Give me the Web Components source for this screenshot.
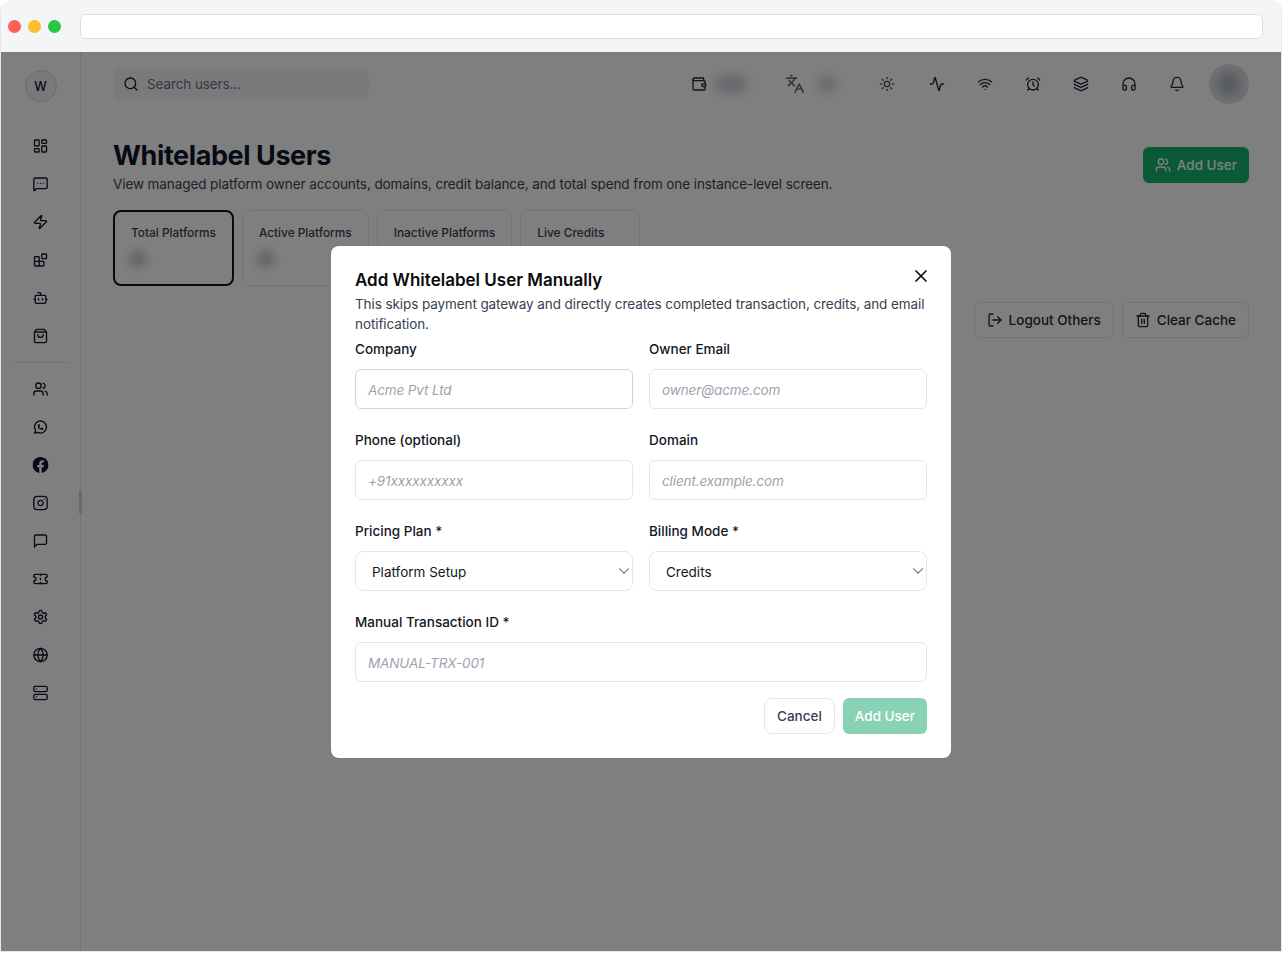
<!DOCTYPE html>
<html lang="en"><head><meta charset="utf-8"><title>Whitelabel Users</title>
<style>
html,body{margin:0;padding:0;background:#fff;height:953px;overflow:hidden}
body{font-family:Inter,"Liberation Sans",sans-serif;font-size:13.5px;color:#111827}
</style></head><body>
<wl-frame>
  <wl-sidebar slot="side">
    <wl-nav name="dashboard"></wl-nav><wl-nav name="chat"></wl-nav><wl-nav name="zap"></wl-nav><wl-nav name="blocks"></wl-nav><wl-nav name="bot"></wl-nav><wl-nav name="bag"></wl-nav>
    <wl-rule></wl-rule>
    <wl-nav name="users"></wl-nav><wl-nav name="whatsapp"></wl-nav><wl-nav name="facebook"></wl-nav><wl-nav name="instagram"></wl-nav><wl-nav name="message"></wl-nav><wl-nav name="ticket"></wl-nav><wl-nav name="settings"></wl-nav><wl-nav name="globe"></wl-nav><wl-nav name="server"></wl-nav>
  </wl-sidebar>
  <wl-topbar slot="top"></wl-topbar>
  <wl-page slot="page">
    <span slot="title">Whitelabel Users</span>
    <span slot="sub">View managed platform owner accounts, domains, credit balance, and total spend from one instance-level screen.</span>
    <wl-btn slot="action" variant="primary" icon="users">Add User</wl-btn>
    <wl-stat slot="stats" active dot>Total Platforms</wl-stat>
    <wl-stat slot="stats" dot>Active Platforms</wl-stat>
    <wl-stat slot="stats">Inactive Platforms</wl-stat>
    <wl-stat slot="stats">Live Credits</wl-stat>
    <wl-btn slot="tools" icon="logout">Logout Others</wl-btn>
    <wl-btn slot="tools" icon="trash">Clear Cache</wl-btn>
  </wl-page>
  <wl-modal slot="modal">
    <span slot="title">Add Whitelabel User Manually</span>
    <span slot="desc">This skips payment gateway and directly creates completed transaction, credits, and email notification.</span>
    <wl-field label="Company" focus>Acme Pvt Ltd</wl-field>
    <wl-field label="Owner Email">owner@acme.com</wl-field>
    <wl-field label="Phone (optional)">+91xxxxxxxxxx</wl-field>
    <wl-field label="Domain">client.example.com</wl-field>
    <wl-field label="Pricing Plan *" select>Platform Setup</wl-field>
    <wl-field label="Billing Mode *" select>Credits</wl-field>
    <wl-field label="Manual Transaction ID *" wide>MANUAL-TRX-001</wl-field>
    <wl-btn slot="actions" variant="cancel">Cancel</wl-btn>
    <wl-btn slot="actions" variant="disabled">Add User</wl-btn>
  </wl-modal>
</wl-frame>
<script>
const ICONS={
dashboard:'<rect width="7" height="9" x="3" y="3" rx="1"/><rect width="7" height="5" x="14" y="3" rx="1"/><rect width="7" height="9" x="14" y="12" rx="1"/><rect width="7" height="5" x="3" y="16" rx="1"/>',
chat:'<path d="M22 17a2 2 0 0 1-2 2H6.828a2 2 0 0 0-1.414.586l-2.202 2.202A.71.71 0 0 1 2 21.286V5a2 2 0 0 1 2-2h16a2 2 0 0 1 2 2z"/><path d="M12 11h.01"/><path d="M16 11h.01"/><path d="M8 11h.01"/>',
zap:'<path d="M4 14a1 1 0 0 1-.78-1.63l9.9-10.2a.5.5 0 0 1 .86.46l-1.92 6.02A1 1 0 0 0 13 10h7a1 1 0 0 1 .78 1.63l-9.9 10.2a.5.5 0 0 1-.86-.46l1.92-6.02A1 1 0 0 0 11 14z"/>',
blocks:'<rect width="7" height="7" x="14" y="3" rx="1"/><path d="M10 21V8a1 1 0 0 0-1-1H4a1 1 0 0 0-1 1v12a1 1 0 0 0 1 1h12a1 1 0 0 0 1-1v-5a1 1 0 0 0-1-1H3"/>',
bot:'<path d="M12 8V4H8"/><rect width="16" height="12" x="4" y="8" rx="2"/><path d="M2 14h2"/><path d="M20 14h2"/><path d="M15 13v2"/><path d="M9 13v2"/>',
bag:'<path d="M16 10a4 4 0 0 1-8 0"/><path d="M3.103 6.034h17.794"/><path d="M3.4 5.467a2 2 0 0 0-.4 1.2V20a2 2 0 0 0 2 2h14a2 2 0 0 0 2-2V6.667a2 2 0 0 0-.4-1.2l-2-2.667A2 2 0 0 0 17 2H7a2 2 0 0 0-1.6.8z"/>',
users:'<path d="M16 21v-2a4 4 0 0 0-4-4H6a4 4 0 0 0-4 4v2"/><path d="M16 3.128a4 4 0 0 1 0 7.744"/><path d="M22 21v-2a4 4 0 0 0-3-3.87"/><circle cx="9" cy="7" r="4"/>',
whatsapp:'<path d="M3 21l1.65-3.8a9 9 0 1 1 3.4 2.9L3 21"/><path d="M9 10a.5.5 0 0 0 1 0V9a.5.5 0 0 0-1 0v1a5 5 0 0 0 5 5h1a.5.5 0 0 0 0-1h-1a.5.5 0 0 0 0 1"/>',
facebook:'<path fill="currentColor" stroke="none" d="M24 12.073c0-6.627-5.373-12-12-12s-12 5.373-12 12c0 5.99 4.388 10.954 10.125 11.854v-8.385H7.078v-3.47h3.047V9.43c0-3.007 1.792-4.669 4.533-4.669 1.312 0 2.686.235 2.686.235v2.953H15.83c-1.491 0-1.956.925-1.956 1.874v2.25h3.328l-.532 3.47h-2.796v8.385C19.612 23.027 24 18.062 24 12.073z"/>',
instagram:'<rect width="20" height="20" x="2" y="2" rx="5" ry="5"/><path d="M16 11.37A4 4 0 1 1 12.63 8 4 4 0 0 1 16 11.37z"/><line x1="17.5" x2="17.51" y1="6.5" y2="6.5"/>',
message:'<path d="M21 15a2 2 0 0 1-2 2H7l-4 4V5a2 2 0 0 1 2-2h14a2 2 0 0 1 2 2z"/>',
ticket:'<path d="M2 9a3 3 0 0 1 0 6v2a2 2 0 0 0 2 2h16a2 2 0 0 0 2-2v-2a3 3 0 0 1 0-6V7a2 2 0 0 0-2-2H4a2 2 0 0 0-2 2Z"/><path d="M12 5v2"/><path d="M12 17v2"/><path d="M12 11v2"/>',
settings:'<path d="M12.22 2h-.44a2 2 0 0 0-2 2v.18a2 2 0 0 1-1 1.73l-.43.25a2 2 0 0 1-2 0l-.15-.08a2 2 0 0 0-2.73.73l-.22.38a2 2 0 0 0 .73 2.73l.15.1a2 2 0 0 1 1 1.72v.51a2 2 0 0 1-1 1.74l-.15.09a2 2 0 0 0-.73 2.73l.22.38a2 2 0 0 0 2.73.73l.15-.08a2 2 0 0 1 2 0l.43.25a2 2 0 0 1 1 1.73V20a2 2 0 0 0 2 2h.44a2 2 0 0 0 2-2v-.18a2 2 0 0 1 1-1.73l.43-.25a2 2 0 0 1 2 0l.15.08a2 2 0 0 0 2.73-.73l.22-.39a2 2 0 0 0-.73-2.73l-.15-.08a2 2 0 0 1-1-1.74v-.5a2 2 0 0 1 1-1.74l.15-.09a2 2 0 0 0 .73-2.73l-.22-.38a2 2 0 0 0-2.73-.73l-.15.08a2 2 0 0 1-2 0l-.43-.25a2 2 0 0 1-1-1.73V4a2 2 0 0 0-2-2z"/><circle cx="12" cy="12" r="3"/>',
globe:'<circle cx="12" cy="12" r="10"/><path d="M12 2a14.5 14.5 0 0 0 0 20 14.5 14.5 0 0 0 0-20"/><path d="M2 12h20"/>',
server:'<rect width="20" height="8" x="2" y="2" rx="2" ry="2"/><rect width="20" height="8" x="2" y="14" rx="2" ry="2"/><line x1="6" x2="6.01" y1="6" y2="6"/><line x1="6" x2="6.01" y1="18" y2="18"/>',
wallet:'<path d="M19 7V4a1 1 0 0 0-1-1H5a2 2 0 0 0 0 4h15a1 1 0 0 1 1 1v4h-3a2 2 0 0 0 0 4h3a1 1 0 0 0 1-1v-2a1 1 0 0 0-1-1"/><path d="M3 5v14a2 2 0 0 0 2 2h15a1 1 0 0 0 1-1v-4"/>',
languages:'<path d="m5 8 6 6"/><path d="m4 14 6-6 2-3"/><path d="M2 5h12"/><path d="M7 2h1"/><path d="m22 22-5-10-5 10"/><path d="M14 18h6"/>',
sun:'<circle cx="12" cy="12" r="4"/><path d="M12 2v2"/><path d="M12 20v2"/><path d="m4.93 4.93 1.41 1.41"/><path d="m17.66 17.66 1.41 1.41"/><path d="M2 12h2"/><path d="M20 12h2"/><path d="m6.34 17.66-1.41 1.41"/><path d="m19.07 4.93-1.41 1.41"/>',
activity:'<path d="M22 12h-2.48a2 2 0 0 0-1.93 1.46l-2.35 8.36a.25.25 0 0 1-.48 0L9.24 2.18a.25.25 0 0 0-.48 0l-2.35 8.36A2 2 0 0 1 4.49 12H2"/>',
wifi:'<path d="M12 20h.01"/><path d="M2 8.82a15 15 0 0 1 20 0"/><path d="M5 12.859a10 10 0 0 1 14 0"/><path d="M8.5 16.429a5 5 0 0 1 7 0"/>',
alarm:'<circle cx="12" cy="13" r="8"/><path d="M12 9v4l2 2"/><path d="M5 3 2 6"/><path d="m22 6-3-3"/><path d="M6.38 18.7 4 21"/><path d="M17.64 18.67 20 21"/>',
layers:'<path d="M12.83 2.18a2 2 0 0 0-1.66 0L2.6 6.08a1 1 0 0 0 0 1.83l8.58 3.91a2 2 0 0 0 1.66 0l8.58-3.9a1 1 0 0 0 0-1.83z"/><path d="M2 12a1 1 0 0 0 .58.91l8.6 3.91a2 2 0 0 0 1.65 0l8.58-3.9A1 1 0 0 0 22 12"/><path d="M2 17a1 1 0 0 0 .58.91l8.6 3.91a2 2 0 0 0 1.65 0l8.58-3.9A1 1 0 0 0 22 17"/>',
headphones:'<path d="M3 14h3a2 2 0 0 1 2 2v3a2 2 0 0 1-2 2H5a2 2 0 0 1-2-2v-7a9 9 0 0 1 18 0v7a2 2 0 0 1-2 2h-1a2 2 0 0 1-2-2v-3a2 2 0 0 1 2-2h3"/>',
bell:'<path d="M10.268 21a2 2 0 0 0 3.464 0"/><path d="M3.262 15.326A1 1 0 0 0 4 17h16a1 1 0 0 0 .74-1.673C19.41 13.956 18 12.499 18 8A6 6 0 0 0 6 8c0 4.499-1.411 5.956-2.738 7.326"/>',
search:'<path d="m21 21-4.34-4.34"/><circle cx="11" cy="11" r="8"/>',
logout:'<path d="m16 17 5-5-5-5"/><path d="M21 12H9"/><path d="M9 21H5a2 2 0 0 1-2-2V5a2 2 0 0 1 2-2h4"/>',
trash:'<path d="M10 11v6"/><path d="M14 11v6"/><path d="M19 6v14a2 2 0 0 1-2 2H7a2 2 0 0 1-2-2V6"/><path d="M3 6h18"/><path d="M8 6V4a2 2 0 0 1 2-2h4a2 2 0 0 1 2 2v2"/>',
x:'<path d="M18 6 6 18"/><path d="m6 6 12 12"/>',
chevron:'<path d="m6 9 6 6 6-6"/>'
};
function el(tag,html){
  customElements.define(tag,class extends HTMLElement{
    constructor(){super();this.attachShadow({mode:'open'});}
    connectedCallback(){this.shadowRoot.innerHTML=typeof html==='function'?html(this):html;}
  });
}
function svg(name,size,sw){return `<svg xmlns="http://www.w3.org/2000/svg" width="${size}" height="${size}" viewBox="0 0 24 24" fill="none" stroke="currentColor" stroke-width="${sw||2}" stroke-linecap="round" stroke-linejoin="round" style="display:block;flex:none">${ICONS[name]}</svg>`;}

el('wl-frame',`<style>
:host{display:flex;flex-direction:column;width:1282px;height:952px;box-sizing:border-box;border:1px solid #e5e7eb;border-top:0;border-radius:12px 12px 0 0;overflow:hidden;background:#fff}
.chrome{height:52px;flex:none;background:#f4f5f7;display:flex;align-items:center;gap:7px;padding:0 19px 0 8px;box-sizing:border-box;margin:0 -1px}
.dot{width:13px;height:13px;border-radius:50%;flex:none}
.url{flex:1;height:25px;margin-left:12px;background:#fff;border:1px solid #dcdde1;border-radius:6px;box-sizing:border-box}
.app{position:relative;flex:1;display:flex;min-height:0}
.main{flex:1;display:flex;flex-direction:column;min-width:0}
.overlay{position:absolute;inset:0;background:rgba(0,0,0,.5);display:flex;align-items:center;justify-content:center}
.thumb{position:absolute;left:78px;top:438px;width:3px;height:24px;border-radius:2px;background:#cbd5e1}
</style>
<div class="chrome"><span class="dot" style="background:#ff5f57"></span><span class="dot" style="background:#febc2e"></span><span class="dot" style="background:#28c840"></span><div class="url"></div></div>
<div class="app"><slot name="side"></slot><div class="main"><slot name="top"></slot><slot name="page"></slot></div><div class="thumb"></div><div class="overlay"><slot name="modal"></slot></div></div>`);

el('wl-sidebar',`<style>
:host{display:flex;flex-direction:column;align-items:flex-start;width:80px;flex:none;box-sizing:border-box;border-right:1px solid #e5e7eb;padding-top:18px;color:#1e293b}
.av{width:32px;height:32px;box-sizing:border-box;border-radius:50%;background:#f3f4f6;border:1px solid #d1d5db;display:flex;align-items:center;justify-content:center;font-size:12.5px;font-weight:500;color:#111827;margin:0 0 25px 23.5px}
</style><div class="av">W</div><slot></slot>`);

el('wl-nav',h=>`<style>:host{display:flex;width:78px;height:38px;align-items:center;justify-content:center;color:#0f172a}svg{transform:translateX(.5px)}</style>${svg(h.getAttribute('name'),16)}`);
el('wl-rule',`<style>:host{display:block;width:56px;height:1px;background:#e5e7eb;margin:7px 0 7px 12px}</style>`);

el('wl-topbar',()=>`<style>
:host{display:flex;align-items:center;height:64px;flex:none;padding:0 32px;color:#1e293b}
.search{width:256px;height:32px;box-sizing:border-box;background:#f3f4f6;border-radius:8px;display:flex;align-items:center;gap:8px;padding:0 10px;color:#6b7280;font-size:13.5px;letter-spacing:-.1px;flex:none;white-space:nowrap}
.search svg{color:#111827}
.grow{flex:1}
.blur{background:#c4c9d2;border-radius:6px;filter:blur(6px);height:16px}
.g{display:flex;align-items:center}
.b{width:40px;height:40px;display:flex;align-items:center;justify-content:center;flex:none}
.pic{width:40px;height:40px;border-radius:50%;background:#e5e7eb;margin-left:12px;position:relative;overflow:hidden;flex:none}
.pic i{position:absolute;left:9px;top:9px;width:22px;height:22px;border-radius:50%;background:#9ca3af;filter:blur(7px)}
</style>
<div class="search">${svg('search',16)}<span>Search users...</span></div>
<div class="grow"></div>
<div class="g" style="color:#1f2937">${svg('wallet',16)}<div class="blur" style="width:30px;margin-left:9px"></div></div>
<div class="g" style="margin-left:39px;color:#6b7280">${svg('languages',20)}<div class="blur" style="width:16px;margin-left:14px"></div></div>
<div class="b" style="margin-left:32px;color:#4b5563">${svg('sun',16)}</div>
<div class="b" style="margin-left:10px">${svg('activity',16)}</div>
<div class="b" style="margin-left:8px">${svg('wifi',16)}</div>
<div class="b" style="margin-left:8px">${svg('alarm',16)}</div>
<div class="b" style="margin-left:8px">${svg('layers',16)}</div>
<div class="b" style="margin-left:8px">${svg('headphones',16)}</div>
<div class="b" style="margin-left:8px">${svg('bell',16)}</div>
<div class="pic"><i></i></div>`);

el('wl-page',`<style>
:host{display:block;padding:21px 32px 0}
.head{display:flex;justify-content:space-between;align-items:flex-start}
h1{margin:0;padding-top:1px;font-size:27px;line-height:36px;font-weight:700;letter-spacing:-.42px;color:#0f172a}
p{margin:0;font-size:13.5px;line-height:20px;letter-spacing:-.09px;color:#374151}
::slotted([slot=action]){margin-top:10px}
.stats{display:flex;gap:8px;margin-top:16px}
.tools{display:flex;gap:8px;justify-content:flex-end;margin-top:16px}
</style>
<div class="head"><div><h1><slot name="title"></slot></h1><p><slot name="sub"></slot></p></div><slot name="action"></slot></div>
<div class="stats"><slot name="stats"></slot></div>
<div class="tools"><slot name="tools"></slot></div>`);

el('wl-stat',h=>`<style>
:host{display:block;box-sizing:border-box;min-width:120px;height:76px;border:1px solid #e5e7eb;border-radius:8px;padding:14px 16px 0;font-size:11.85px;line-height:16px;font-weight:500;color:#374151;background:#fff}
:host([active]){border:2px solid #0f172a;padding:13px 16px 0}
.v{width:18px;height:18px;border-radius:50%;background:#c4c9d2;filter:blur(5px);margin:9px 0 0 -2px}
</style><slot></slot>${h.hasAttribute('dot')?'<div class="v"></div>':''}`);

el('wl-btn',h=>{
  const i=h.getAttribute('icon');
  return `<style>
:host{display:inline-flex;align-items:center;justify-content:center;gap:6px;box-sizing:border-box;height:36px;padding:0 12px;border:1px solid #e5e7eb;border-radius:6px;font-size:13.5px;font-weight:500;color:#1f2937;background:#fff;white-space:nowrap;flex:none}
:host([variant=primary]){background:#15b570;border:0;color:#fff}
:host([variant=cancel]){color:#374151;border-radius:8px}
:host([variant=disabled]){background:#8ad2b5;border:0;color:#fff}
</style>${i?svg(i,16):''}<slot></slot>`;});

el('wl-modal',()=>`<style>
:host{display:block;box-sizing:border-box;width:620px;height:512px;background:#fff;border-radius:8px;padding:24px;position:relative;color:#0a0a0a}
h2{margin:0;font-size:17px;line-height:20px;font-weight:600;color:#0a0a0a}
p{margin:4px 0 5px;font-size:13.5px;line-height:20px;letter-spacing:-.09px;color:#374151}
.grid{display:grid;grid-template-columns:1fr 1fr;column-gap:16px;row-gap:21px}
.act{display:flex;justify-content:flex-end;gap:8px;margin-top:16px}
.close{position:absolute;right:20px;top:20px;width:20px;height:20px;color:#0a0a0a}
</style>
<h2><slot name="title"></slot></h2><p><slot name="desc"></slot></p>
<div class="grid"><slot></slot></div>
<div class="act"><slot name="actions"></slot></div>
<div class="close">${svg('x',20)}</div>`);

el('wl-field',h=>{
  const sel=h.hasAttribute('select');
  return `<style>
:host{display:block;min-width:0}
:host([wide]){grid-column:1 / -1}
.l{font-size:13.5px;line-height:20px;font-weight:500;color:#111827;margin-bottom:10px}
.c{height:40px;box-sizing:border-box;border:1px solid #e5e7eb;border-radius:6px;background:#fff;display:flex;align-items:center;padding:2px 12px 0;font-size:13.5px;font-style:italic;letter-spacing:-.12px;color:#9ca3af}
:host([focus]) .c{border-color:#d1d5db}
:host([select]) .c{padding:2px 0 0 16px;font-style:normal;letter-spacing:0;color:#111827;justify-content:space-between;border-radius:8px}
svg{color:#4b5563;margin:-2px -1px 0 0}
</style><div class="l">${h.getAttribute('label')}</div><div class="c"><span><slot></slot></span>${sel?svg('chevron',18,1.4):''}</div>`;});
</script>
</body></html>
